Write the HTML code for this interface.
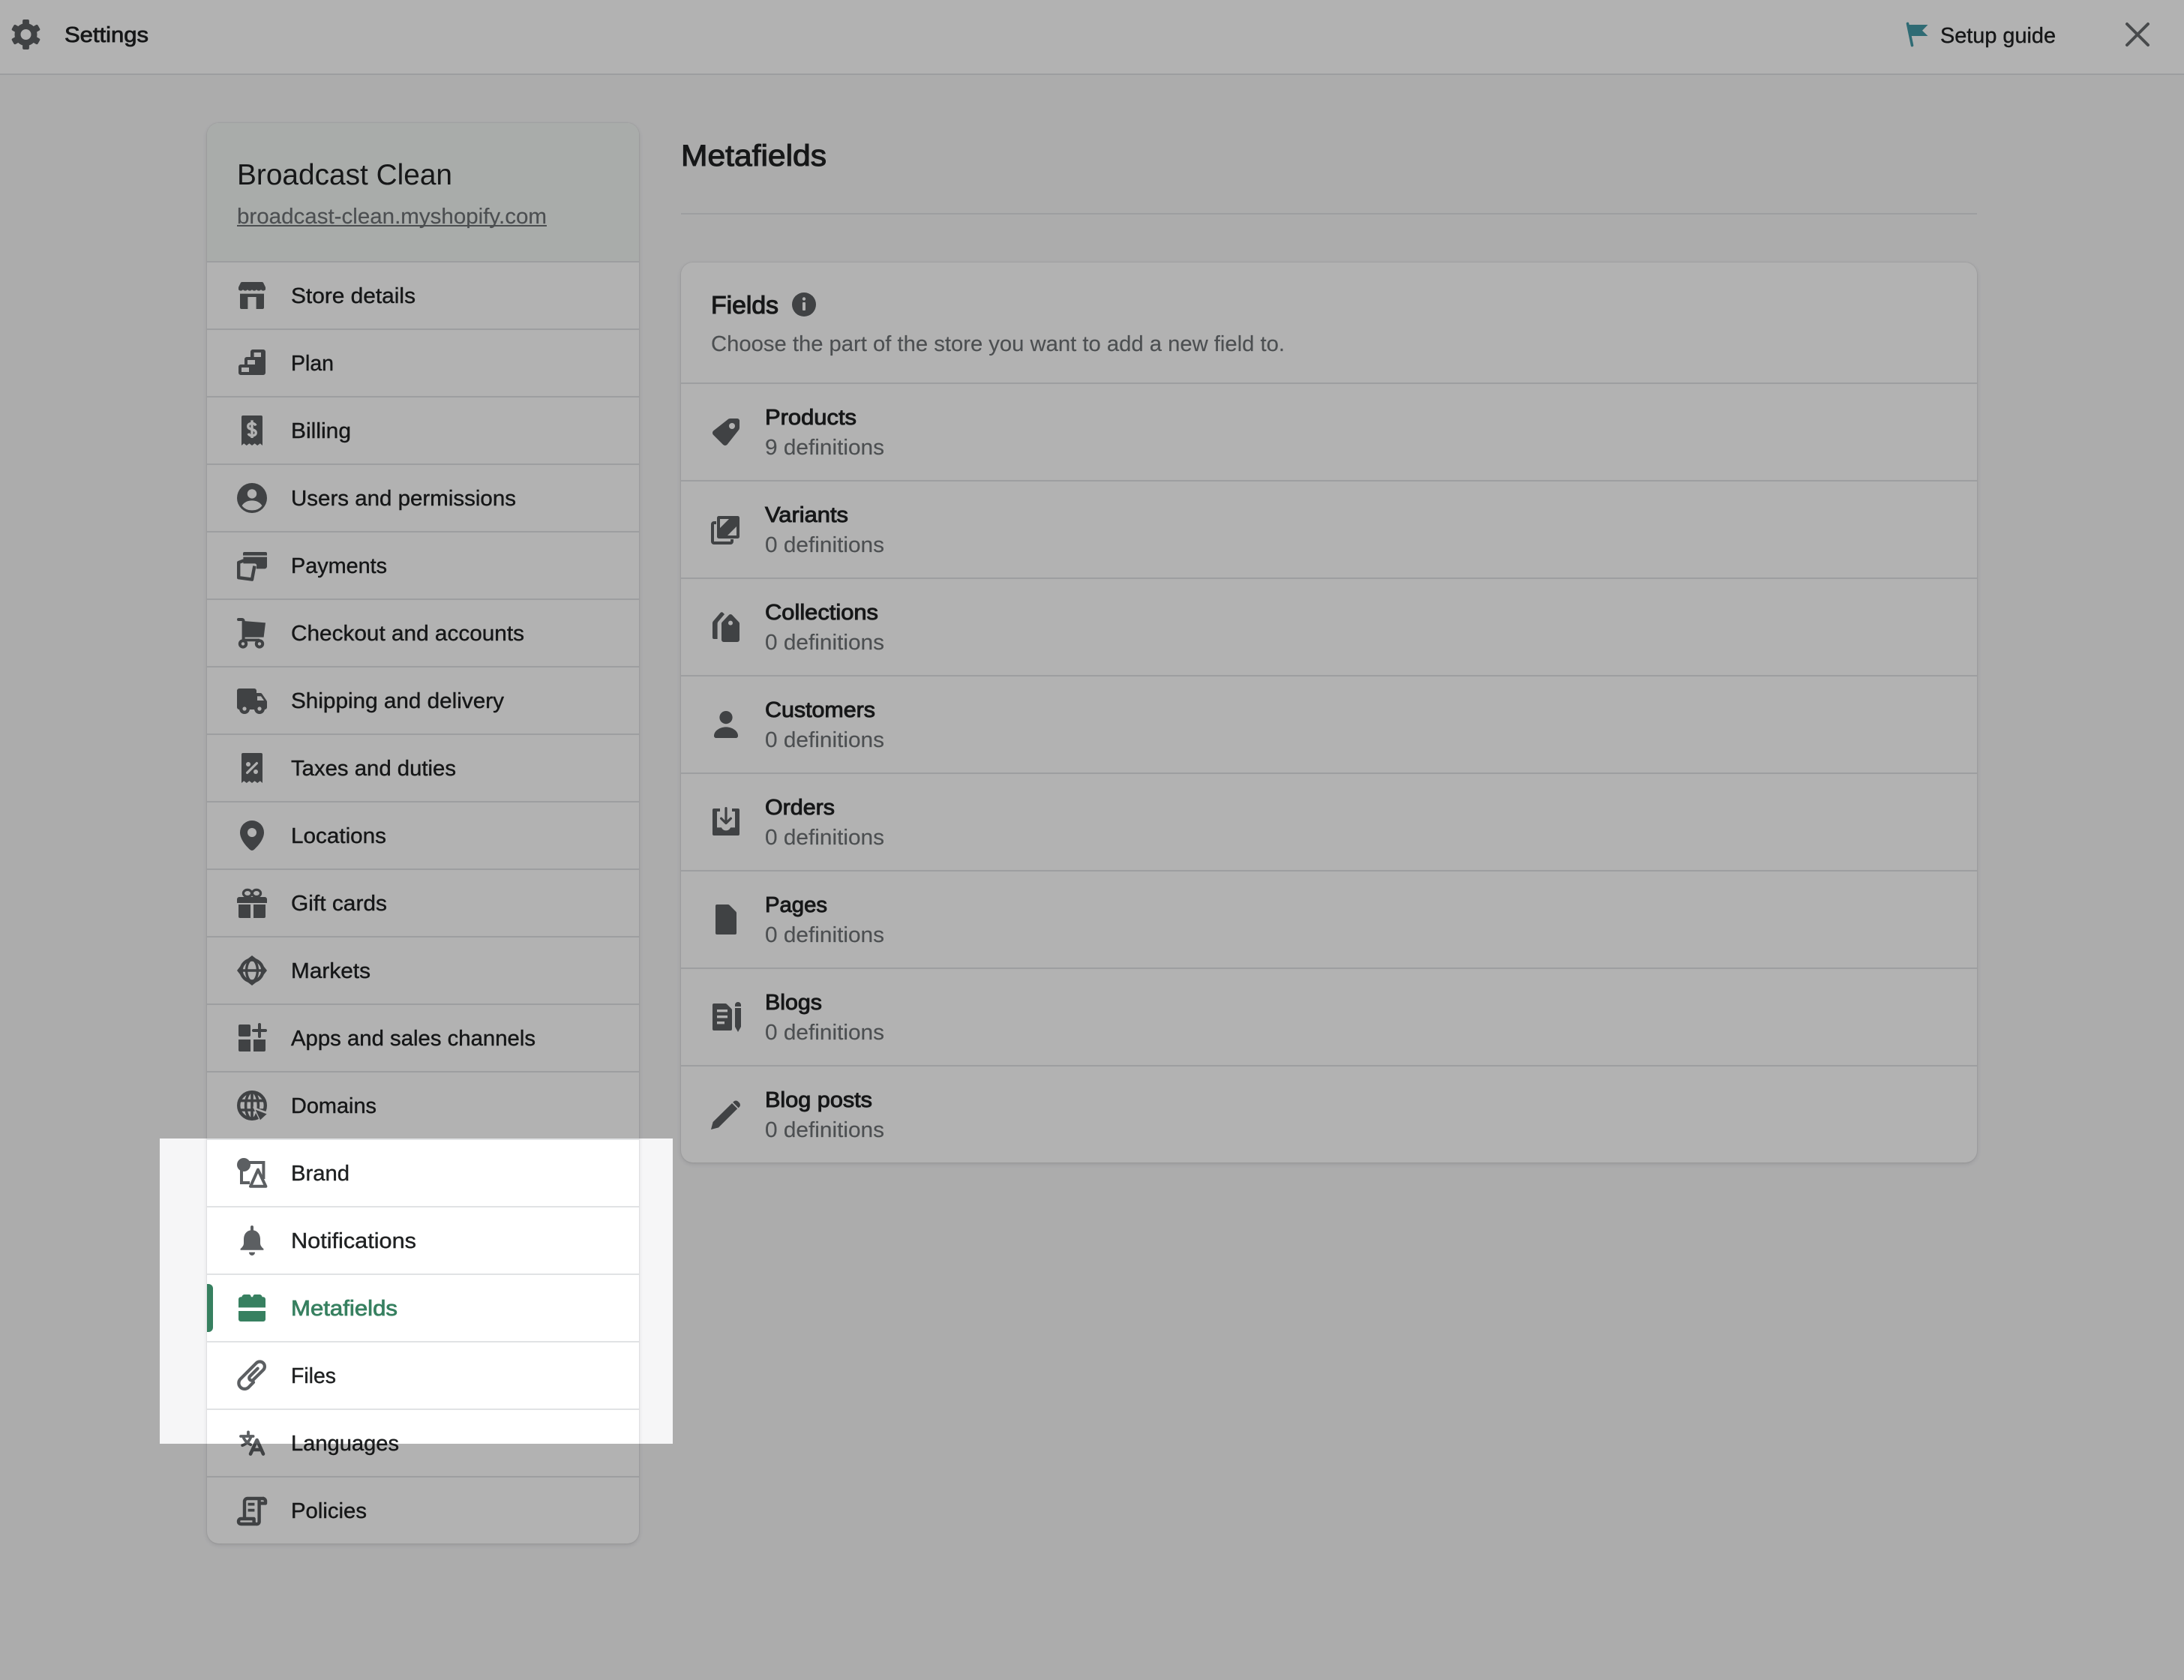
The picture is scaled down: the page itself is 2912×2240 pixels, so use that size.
<!DOCTYPE html>
<html lang="en">
<head>
<meta charset="utf-8">
<title>Metafields</title>
<style>
html,body{margin:0;padding:0;width:2912px;height:2240px;overflow:hidden;background:#f6f6f7;font-family:"Liberation Sans",sans-serif}
.a{position:absolute}
.top{left:0;top:0;width:2912px;height:98px;background:#fff;border-bottom:2px solid #e1e3e5}
.card{background:#fff;border-radius:16px;box-shadow:0 0 0 1px rgba(63,63,68,.05),0 2px 6px rgba(63,63,68,.15)}
.head{left:276px;top:164px;width:576px;height:184px;background:#f2f6f4;border-radius:16px 16px 0 0}
.ov{position:absolute;background:rgba(0,0,0,.3)}
svg{position:absolute;left:0;top:0}
text{font-family:"Liberation Sans",sans-serif;fill:#202223}
.n{font-size:29px;stroke:#202223;stroke-width:.4px}
.t{font-size:29px;stroke:#202223;stroke-width:.95px}
.s{font-size:29px;fill:#6d7175;stroke:#6d7175;stroke-width:.15px}
</style>
</head>
<body>
<div class="a top"></div>
<div class="a card" style="left:276px;top:164px;width:576px;height:1894px"></div>
<div class="a head"></div>
<div class="a card" style="left:908px;top:350px;width:1728px;height:1200px"></div>
<div class="a" style="left:908px;top:284px;width:1728px;height:2px;background:#e1e3e5"></div>

<svg width="2912" height="2240" viewBox="0 0 2912 2240">
<g fill="#e1e3e5">
<rect x="276" y="348" width="576" height="2"/><rect x="276" y="438" width="576" height="2"/><rect x="276" y="528" width="576" height="2"/><rect x="276" y="618" width="576" height="2"/><rect x="276" y="708" width="576" height="2"/><rect x="276" y="798" width="576" height="2"/><rect x="276" y="888" width="576" height="2"/><rect x="276" y="978" width="576" height="2"/><rect x="276" y="1068" width="576" height="2"/><rect x="276" y="1158" width="576" height="2"/><rect x="276" y="1248" width="576" height="2"/><rect x="276" y="1338" width="576" height="2"/><rect x="276" y="1428" width="576" height="2"/><rect x="276" y="1518" width="576" height="2"/><rect x="276" y="1608" width="576" height="2"/><rect x="276" y="1698" width="576" height="2"/><rect x="276" y="1788" width="576" height="2"/><rect x="276" y="1878" width="576" height="2"/><rect x="276" y="1968" width="576" height="2"/>
<rect x="908" y="510" width="1728" height="2"/><rect x="908" y="640" width="1728" height="2"/><rect x="908" y="770" width="1728" height="2"/><rect x="908" y="900" width="1728" height="2"/><rect x="908" y="1030" width="1728" height="2"/><rect x="908" y="1160" width="1728" height="2"/><rect x="908" y="1290" width="1728" height="2"/><rect x="908" y="1420" width="1728" height="2"/>
</g>
<path d="M276 1712h2a6 6 0 0 1 6 6v52a6 6 0 0 1-6 6h-2z" fill="#378060"/>

<!-- top bar -->
<g transform="translate(14.5,26) scale(2)" fill="#5c5f62">
<circle cx="10" cy="10" r="5.500" fill="none" stroke="#5c5f62" stroke-width="4"/>
<rect x="7.800" y="0" width="4.400" height="4.500" rx="1"/><rect x="7.800" y="0" width="4.400" height="4.500" rx="1" transform="rotate(60 10 10)"/><rect x="7.800" y="0" width="4.400" height="4.500" rx="1" transform="rotate(120 10 10)"/><rect x="7.800" y="0" width="4.400" height="4.500" rx="1" transform="rotate(180 10 10)"/><rect x="7.800" y="0" width="4.400" height="4.500" rx="1" transform="rotate(240 10 10)"/><rect x="7.800" y="0" width="4.400" height="4.500" rx="1" transform="rotate(300 10 10)"/>
</g>
<text x="86" y="56" class="t" textLength="112" lengthAdjust="spacingAndGlyphs" style="stroke-width:.8px">Settings</text>
<path d="M2544 33h26.500l-7.500 7.800 7.500 7.200h-23z" fill="#449aa6"/>
<path d="M2543.500 31.500l6 29" stroke="#449aa6" stroke-width="3.600" stroke-linecap="round" fill="none"/>
<text x="2587" y="57" class="n" textLength="154" lengthAdjust="spacingAndGlyphs">Setup guide</text>
<path d="M2836 32l28 28M2864 32l-28 28" stroke="#686a6d" stroke-width="4" stroke-linecap="round" fill="none"/>

<!-- store header -->
<text x="316" y="246" style="font-size:38.500px" textLength="287" lengthAdjust="spacingAndGlyphs">Broadcast Clean</text>
<text x="316" y="298" class="s" textLength="413" lengthAdjust="spacingAndGlyphs">broadcast-clean.myshopify.com</text>
<rect x="316" y="300" width="413" height="2" fill="#6d7175"/>

<!-- sidebar labels -->
<text x="388" y="404" class="n" textLength="166" lengthAdjust="spacingAndGlyphs">Store details</text>
<text x="388" y="494" class="n" textLength="57" lengthAdjust="spacingAndGlyphs">Plan</text>
<text x="388" y="584" class="n" textLength="80" lengthAdjust="spacingAndGlyphs">Billing</text>
<text x="388" y="674" class="n" textLength="300" lengthAdjust="spacingAndGlyphs">Users and permissions</text>
<text x="388" y="764" class="n" textLength="128" lengthAdjust="spacingAndGlyphs">Payments</text>
<text x="388" y="854" class="n" textLength="311" lengthAdjust="spacingAndGlyphs">Checkout and accounts</text>
<text x="388" y="944" class="n" textLength="284" lengthAdjust="spacingAndGlyphs">Shipping and delivery</text>
<text x="388" y="1034" class="n" textLength="220" lengthAdjust="spacingAndGlyphs">Taxes and duties</text>
<text x="388" y="1124" class="n" textLength="127" lengthAdjust="spacingAndGlyphs">Locations</text>
<text x="388" y="1214" class="n" textLength="128" lengthAdjust="spacingAndGlyphs">Gift cards</text>
<text x="388" y="1304" class="n" textLength="106" lengthAdjust="spacingAndGlyphs">Markets</text>
<text x="388" y="1394" class="n" textLength="326" lengthAdjust="spacingAndGlyphs">Apps and sales channels</text>
<text x="388" y="1484" class="n" textLength="114" lengthAdjust="spacingAndGlyphs">Domains</text>
<text x="388" y="1574" class="n" textLength="78" lengthAdjust="spacingAndGlyphs">Brand</text>
<text x="388" y="1664" class="n" textLength="167" lengthAdjust="spacingAndGlyphs">Notifications</text>
<text x="388" y="1754" class="t" textLength="142" lengthAdjust="spacingAndGlyphs" style="fill:#378060;stroke:#378060;stroke-width:.8px">Metafields</text>
<text x="388" y="1844" class="n" textLength="60" lengthAdjust="spacingAndGlyphs">Files</text>
<text x="388" y="1934" class="n" textLength="144" lengthAdjust="spacingAndGlyphs">Languages</text>
<text x="388" y="2024" class="n" textLength="101" lengthAdjust="spacingAndGlyphs">Policies</text>

<!-- sidebar icons -->
<g fill="#5c5f62">
<g transform="translate(316,374) scale(2)">
<path d="M3.500 1h13c.5 0 .9.2 1.100.6L19 4.500V6c-.6 1.100-2.400 1.100-3 0-.6 1.100-2.400 1.100-3 0-.6 1.100-2.400 1.100-3 0-.6 1.100-2.400 1.100-3 0-.6 1.100-2.400 1.100-3 0-.6 1.100-2.400 1.100-3 0V4.500l1.400-2.900c.2-.4.600-.6 1.100-.6z"/>
<path d="M2 8.800h16V18c0 .6-.4 1-1 1h-4.200v-8H7.200v8H3c-.6 0-1-.4-1-1z"/>
</g>
<g transform="translate(316,464) scale(2)">
<path fill-rule="evenodd" d="M10.500 1H17.500A1.500 1.500 0 0 1 19 2.500v14a1.500 1.500 0 0 1-1.500 1.500h-15A1.500 1.500 0 0 1 1 16.500v-4A1.500 1.500 0 0 1 2.500 11H5V7.500A1.500 1.500 0 0 1 6.500 6H9V2.500A1.500 1.500 0 0 1 10.500 1zM11.300 3v3H16V3zM7 8v3h5V8zM3 13v3h5v-3z"/>
</g>
<g transform="translate(316,554) scale(2)">
<path d="M4 0h12a1 1 0 0 1 1 1v19l-1.600-1.400-1.800 1.400-1.800-1.400L10 20l-1.800-1.400L6.400 20l-1.800-1.400L3 20V1a1 1 0 0 1 1-1z"/>
<path d="M12.500 6.700C12 5.600 11.100 5.200 10 5.200c-1.400 0-2.600.7-2.600 2 0 1.400 1.300 1.800 2.600 2.100 1.400.3 2.600.8 2.600 2.200 0 1.300-1.200 2-2.600 2-1.100 0-2-.5-2.500-1.500M10 3.200V15" fill="none" stroke="#fff" stroke-width="1.700"/>
</g>
<g transform="translate(316,644) scale(2)">
<circle cx="10" cy="10" r="10"/><circle cx="10" cy="7.200" r="3.100" fill="#fff"/>
<path d="M3.300 15.200C4.500 13 7 11.700 10 11.700s5.500 1.300 6.700 3.500A8.200 8.200 0 0 1 10 18.200 8.200 8.200 0 0 1 3.300 15.200z" fill="#fff"/>
</g>
<g transform="translate(316,734) scale(2)">
<path d="M5 1h14a1 1 0 0 1 1 1v1.300H4V2a1 1 0 0 1 1-1z"/>
<path d="M4.200 4.300H20v6.200c0 1-.8 1.700-1.700 1.700h-5.500l.3-1.900c.1-.9-.5-1.600-1.300-1.600H4.200z"/>
<path d="M4.500 6.700 1.100 8V18.100L10 19.300l1.700-9" fill="none" stroke="#5c5f62" stroke-width="2.200" stroke-linejoin="round"/>
</g>
<g transform="translate(316,824) scale(2)">
<path d="M1 1h2.300c.6 0 1 .4 1 1V13.800" fill="none" stroke="#5c5f62" stroke-width="2" stroke-linecap="round"/>
<path d="M4.500 2 19 3.200 17.800 12.800H4.500z"/>
<path d="M3.400 13.800h11.600v1.800H3.400z"/>
<circle cx="4" cy="17.200" r="2.100" fill="#fff" stroke="#5c5f62" stroke-width="2"/><circle cx="15" cy="17.200" r="2.100" fill="#fff" stroke="#5c5f62" stroke-width="2"/>
</g>
<g transform="translate(316,914) scale(2)">
<path d="M1.500 2H11.500c.8 0 1.500.7 1.500 1.500V5h2.500c.5 0 .9.2 1.200.6l2.900 4.300c.2.3.4.7.4 1V14.500c0 .8-.7 1.500-1.500 1.500H1.500C.7 16 0 15.300 0 14.500V3.500C0 2.700.7 2 1.500 2z"/>
<path d="M13.500 7.200H16l2 2.800h-4.500z" fill="#fff"/>
<circle cx="5" cy="15.500" r="3.500"/><circle cx="15" cy="15.500" r="3.500"/>
<circle cx="5" cy="15.500" r="1.300" fill="#fff"/><circle cx="15" cy="15.500" r="1.300" fill="#fff"/>
</g>
<g transform="translate(316,1004) scale(2)">
<path d="M4 0h12a1 1 0 0 1 1 1v19l-1.600-1.400-1.800 1.400-1.800-1.400L10 20l-1.800-1.400L6.400 20l-1.800-1.400L3 20V1a1 1 0 0 1 1-1z"/>
<circle cx="7.500" cy="7.500" r="1.500" fill="#fff"/><circle cx="12.500" cy="12.500" r="1.500" fill="#fff"/>
<path d="M13.200 6.800 6.800 13.200" stroke="#fff" stroke-width="1.600" stroke-linecap="round"/>
</g>
<g transform="translate(316,1094) scale(2)">
<path d="M10 0a8 8 0 0 1 8 8c0 4.500-4 9-6.600 11.400a2 2 0 0 1-2.800 0C6 17 2 12.500 2 8a8 8 0 0 1 8-8z"/>
<circle cx="10" cy="8" r="3" fill="#fff"/>
</g>
<g transform="translate(316,1184) scale(2)">
<ellipse cx="7" cy="3.500" rx="2.800" ry="2.300" fill="none" stroke="#5c5f62" stroke-width="1.600"/><ellipse cx="13" cy="3.500" rx="2.800" ry="2.300" fill="none" stroke="#5c5f62" stroke-width="1.600"/>
<path d="M1.500 6h17c.8 0 1.500.7 1.500 1.500V10H0V7.500C0 6.700.7 6 1.500 6z"/>
<path d="M1 11h8v9H2a1 1 0 0 1-1-1zM11 11h8v8a1 1 0 0 1-1 1h-7z"/>
</g>
<g transform="translate(316,1274) scale(2)">
<circle cx="10" cy="10" r="7.200" fill="none" stroke="#5c5f62" stroke-width="2.200"/>
<ellipse cx="10" cy="10" rx="3.700" ry="7.200" fill="none" stroke="#5c5f62" stroke-width="1.700"/>
<path d="M2 10h16" stroke="#5c5f62" stroke-width="1.700"/>
<path d="M10 0l4.500 3.500h-9zM10 20l-4.500-3.500h9zM0 10l3.500-4.500v9zM20 10l-3.500 4.500v-9z"/>
</g>
<g transform="translate(316,1364) scale(2)">
<rect x="1" y="1" width="8" height="8" rx="1"/><path d="M1 11h8v8H2a1 1 0 0 1-1-1zM11 11h8v7a1 1 0 0 1-1 1h-7z"/>
<path d="M11 5h8M15 1v8" stroke="#5c5f62" stroke-width="2" stroke-linecap="round"/>
</g>
<g transform="translate(316,1454) scale(2)">
<circle cx="10" cy="10" r="8.900" fill="none" stroke="#5c5f62" stroke-width="2.200"/>
<ellipse cx="10" cy="10" rx="4.200" ry="9" fill="none" stroke="#5c5f62" stroke-width="1.800"/>
<path d="M1.500 6.800h17M1.500 13h17M10 1v18" stroke="#5c5f62" stroke-width="1.800"/>
<path d="M10.500 10.800l10.500 3.800-5.500 6.400z" fill="#fff"/>
<path d="M12.300 12.800l7.500 2.900-4.300 3.900z"/>
</g>
<g transform="translate(316,1544) scale(2)">
<path d="M5 3h12.700v11M3 6.500V16.500h5.500" fill="none" stroke="#5c5f62" stroke-width="2"/>
<circle cx="4.500" cy="4.500" r="4.500"/>
<path d="M14 7.800 9 18.900h10.200z" fill="#fff" stroke="#5c5f62" stroke-width="2" stroke-linejoin="round"/>
</g>
<g transform="translate(316,1634) scale(2)">
<path d="M10 0c.6 0 1 .4 1 1v2.200c3 .5 4.500 3 4.500 6v2.500c0 1.500.7 2.600 2.200 3.800v.9H2.300v-.9c1.500-1.200 2.200-2.300 2.200-3.800V9.200c0-3 1.500-5.500 4.500-6V1c0-.6.4-1 1-1z"/>
<path d="M8 17.800h4c0 1.200-.9 2.200-2 2.200s-2-1-2-2.200z"/>
</g>
<g transform="translate(316,1724) scale(2)" fill="#378060">
<path d="M1 9.700V4.200c0-.9.7-1.600 1.600-1.600h.6C3.400 1.600 4.200 1 5 1h3c.8 0 1.300.6 1.400 1.600h1.200C10.700 1.600 11.200 1 12 1h3c.8 0 1.600.6 1.800 1.600h.6c.9 0 1.600.7 1.600 1.600v5.500z"/>
<path d="M1 12h18v5.500c0 .8-.7 1.500-1.500 1.500h-15C1.700 19 1 18.300 1 17.500z"/>
</g>
<g transform="translate(316,1814) scale(2)">
<path d="M13.800 5.300 8.600 10.500a1.600 1.600 0 0 0 2.300 2.300L17.500 6.300a3.200 3.200 0 0 0-4.600-4.600L2.100 12.500a3.900 3.900 0 0 0 5.500 5.500L11 14.500" fill="none" stroke="#5c5f62" stroke-width="2.100" stroke-linecap="round"/>
</g>
<g transform="translate(316,1904) scale(2)" fill="none" stroke="#5c5f62" stroke-linecap="round" stroke-linejoin="round">
<path d="M2.500 5.500h8.300M7.500 2.700v2.800M9.400 5.500C8.500 8.500 6.500 10.500 3.600 11.600M4.500 6.800c1 1.900 2.700 3.400 4.600 4.300" stroke-width="1.900"/>
<path d="M9 17.300 13.300 8l4.200 9.300M10.300 14.500h6" stroke-width="2.300"/>
</g>
<g transform="translate(316,1994) scale(2)" fill="none" stroke="#5c5f62" stroke-width="2.200" stroke-linejoin="round">
<path d="M18 2H7c-1.100 0-2 .9-2 2v11"/>
<path d="M14.800 3V17.500c0 1-.8 1.600-1.700 1.600s-1.800-.6-1.800-1.600V15.500H2.600c-.9 0-1.600.7-1.600 1.800S1.700 19 2.600 19H13"/>
<path d="M15 5.200h4V3.700c0-1-.8-1.700-1.800-1.700"/>
<path d="M7.300 5.800h4.400M7.300 9.800h4.400" stroke-width="1.900"/>
</g>
</g>

<!-- main -->
<text x="908" y="221" style="font-size:40px;stroke:#202223;stroke-width:1.100px" textLength="194" lengthAdjust="spacingAndGlyphs">Metafields</text>
<text x="948" y="418" style="font-size:33px;stroke:#202223;stroke-width:1.100px" textLength="90" lengthAdjust="spacingAndGlyphs">Fields</text>
<circle cx="1072" cy="406" r="16" fill="#5c5f62"/>
<circle cx="1072" cy="398.500" r="2.200" fill="#fff"/><rect x="1070" y="403" width="4" height="11" rx="1" fill="#fff"/>
<text x="948" y="468" class="s" textLength="765" lengthAdjust="spacingAndGlyphs">Choose the part of the store you want to add a new field to.</text>

<text x="1020" y="566" class="t" textLength="122" lengthAdjust="spacingAndGlyphs">Products</text>
<text x="1020" y="606" class="s" textLength="159" lengthAdjust="spacingAndGlyphs">9 definitions</text>
<text x="1020" y="696" class="t" textLength="111" lengthAdjust="spacingAndGlyphs">Variants</text>
<text x="1020" y="736" class="s" textLength="159" lengthAdjust="spacingAndGlyphs">0 definitions</text>
<text x="1020" y="826" class="t" textLength="151" lengthAdjust="spacingAndGlyphs">Collections</text>
<text x="1020" y="866" class="s" textLength="159" lengthAdjust="spacingAndGlyphs">0 definitions</text>
<text x="1020" y="956" class="t" textLength="147" lengthAdjust="spacingAndGlyphs">Customers</text>
<text x="1020" y="996" class="s" textLength="159" lengthAdjust="spacingAndGlyphs">0 definitions</text>
<text x="1020" y="1086" class="t" textLength="93" lengthAdjust="spacingAndGlyphs">Orders</text>
<text x="1020" y="1126" class="s" textLength="159" lengthAdjust="spacingAndGlyphs">0 definitions</text>
<text x="1020" y="1216" class="t" textLength="83" lengthAdjust="spacingAndGlyphs">Pages</text>
<text x="1020" y="1256" class="s" textLength="159" lengthAdjust="spacingAndGlyphs">0 definitions</text>
<text x="1020" y="1346" class="t" textLength="76" lengthAdjust="spacingAndGlyphs">Blogs</text>
<text x="1020" y="1386" class="s" textLength="159" lengthAdjust="spacingAndGlyphs">0 definitions</text>
<text x="1020" y="1476" class="t" textLength="143" lengthAdjust="spacingAndGlyphs">Blog posts</text>
<text x="1020" y="1516" class="s" textLength="159" lengthAdjust="spacingAndGlyphs">0 definitions</text>

<g fill="#5c5f62">
<g transform="translate(948,556) scale(2)">
<path d="M13 1h4.500c.8 0 1.500.7 1.500 1.500V7c0 .8-.3 1.500-.8 2L10.800 18.400c-.8.8-2 .8-2.800 0L1.600 12c-.8-.8-.8-2 0-2.800L11 1.800c.5-.5 1.300-.8 2-.8z"/>
<circle cx="14" cy="6" r="2" fill="#fff"/>
</g>
<g transform="translate(948,686) scale(2)">
<path d="M3.500 5.500H2a1 1 0 0 0-1 1V18a1 1 0 0 0 1 1h11a1 1 0 0 0 1-1v-1.500" fill="none" stroke="#5c5f62" stroke-width="2"/>
<rect x="4" y="1" width="15" height="15" rx="1.200"/>
<path d="M6 3h6l-6 6zM17 8v6h-6z" fill="#fff"/>
</g>
<g transform="translate(948,816) scale(2)">
<path d="M13 1.500c.4 0 .8.2 1.100.5L18.500 6.600c.3.3.5.7.5 1.100V18.500c0 .8-.7 1.500-1.500 1.500H8.500C7.700 20 7 19.300 7 18.500V7.700c0-.4.2-.8.500-1.100L11.900 2c.3-.3.7-.5 1.100-.5z"/>
<circle cx="13" cy="7.300" r="1.500" fill="#fff"/>
<path d="M6.300.5c.5-.5 1.200-.5 1.700 0l1 1L5 6.200c-.4.4-.7 1-.7 1.700V18H2a1 1 0 0 1-1-1V7.500c0-.6.2-1.100.6-1.500z"/>
</g>
<g transform="translate(948,946) scale(2)">
<circle cx="10" cy="5.300" r="4.300"/>
<path d="M10 11.700c4 0 8 2.500 8 5.800 0 1-.7 1.500-1.500 1.500h-13c-.8 0-1.500-.5-1.500-1.500 0-3.300 4-5.800 8-5.800z"/>
</g>
<g transform="translate(948,1076) scale(2)">
<path d="M2 1H6V3H4V13.700H7c.5 1.200 1.600 2 3 2s2.500-.8 3-2h3V3h-2V1h4a1 1 0 0 1 1 1v16a1 1 0 0 1-1 1H2a1 1 0 0 1-1-1V2a1 1 0 0 1 1-1z"/>
<path d="M10 .8V10.600M6.800 7.600l3.200 3.200 3.200-3.200" fill="none" stroke="#5c5f62" stroke-width="1.600" stroke-linecap="round" stroke-linejoin="round"/>
</g>
<g transform="translate(948,1206) scale(2)">
<path d="M4 0H11.300c.4 0 .8.2 1.100.5L16.500 4.600c.3.300.5.700.5 1.100V19a1 1 0 0 1-1 1H4a1 1 0 0 1-1-1V1a1 1 0 0 1 1-1z"/>
</g>
<g transform="translate(948,1336) scale(2)">
<path d="M2 1H9.500c.4 0 .8.2 1.100.5L13.500 4.400c.3.300.5.700.5 1.100V18a1 1 0 0 1-1 1H2a1 1 0 0 1-1-1V2a1 1 0 0 1 1-1z"/>
<path d="M4 5h7v1.700H4zM4 9h7v1.700H4zM4 13h5v1.700H4z" fill="#fff"/>
<path d="M16 3v-1a2 2 0 0 1 4 0v1zM16 4h4v12.500l-2 3.500-2-3.500z"/>
</g>
<g transform="translate(948,1466) scale(2)">
<path d="M0 20l1.300-5L14 2.500l3.600 3.600L5 18.700z"/>
<path d="M15.200 1.300a2 2 0 0 1 2.800 0l.9.9a2 2 0 0 1 0 2.800l-.6.6-3.700-3.700z"/>
</g>
</g>
</svg>

<!-- dim overlay around the spotlight -->
<div class="ov" style="left:0;top:0;width:2912px;height:1518px"></div>
<div class="ov" style="left:0;top:1925px;width:2912px;height:315px"></div>
<div class="ov" style="left:0;top:1518px;width:213px;height:407px"></div>
<div class="ov" style="left:897px;top:1518px;width:2015px;height:407px"></div>
</body>
</html>
